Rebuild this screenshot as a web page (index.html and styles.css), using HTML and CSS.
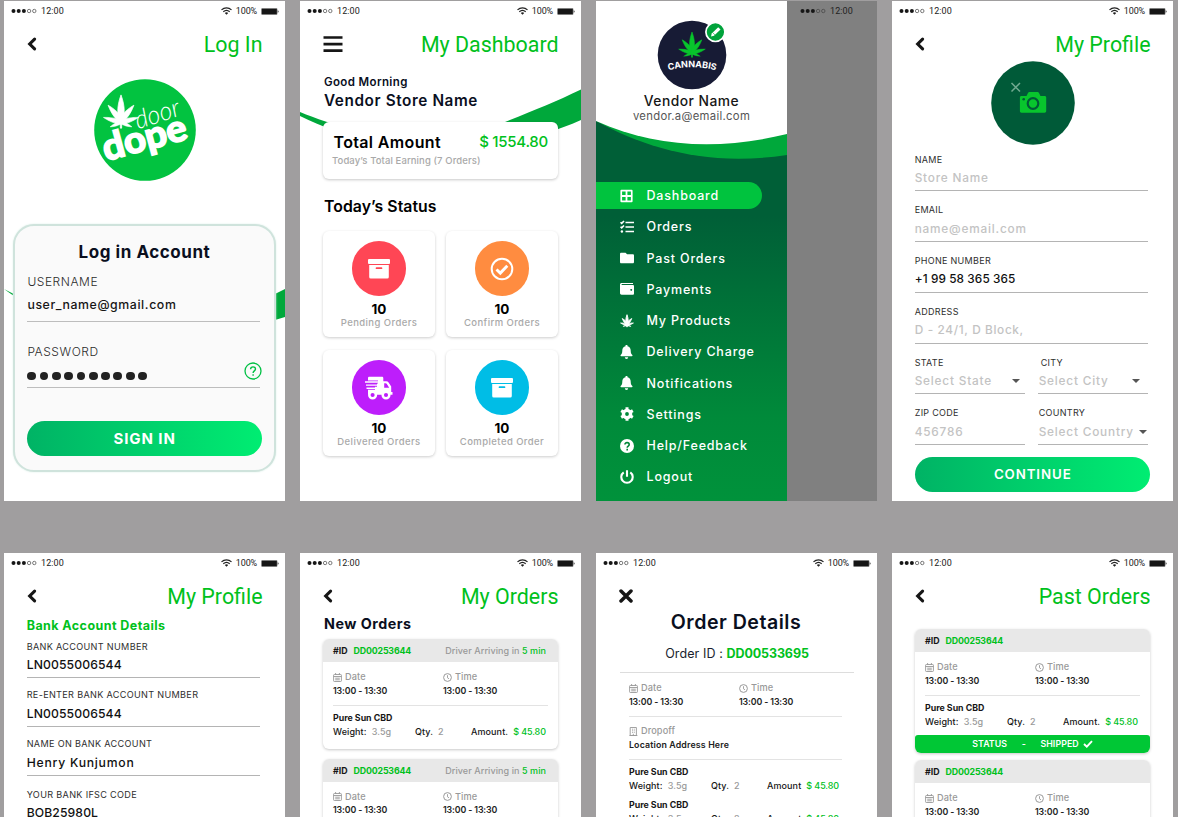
FILE: index.html
```html
<!DOCTYPE html>
<html lang="en">
<head>
<meta charset="utf-8">
<title>Vendor App Screens</title>
<link rel="stylesheet" href="styles.css">
</head>
<body>
<svg class="defs" width="0" height="0">
  <defs>
    <symbol id="dots" viewBox="0 0 26 6"><g fill="#161616"><circle cx="2.5" cy="3" r="2"/><circle cx="7.7" cy="3" r="2"/><circle cx="12.9" cy="3" r="2"/></g><g fill="none" stroke="#444" stroke-width=".7"><circle cx="18.1" cy="3" r="1.7"/><circle cx="23.3" cy="3" r="1.7"/></g></symbol>
    <symbol id="wifi" viewBox="0 0 11 8"><g fill="none" stroke="#222" stroke-width="1.2"><path d="M.5 2.9C3.4.1 7.6.1 10.5 2.9"/><path d="M2.3 4.8c1.9-1.8 4.5-1.8 6.4 0"/></g><path d="M3.8 6c1-.9 2.4-.9 3.4 0L5.5 7.8z" fill="#222"/></symbol>
    <symbol id="battery" viewBox="0 0 18 7"><rect x=".3" y=".3" width="16" height="6.4" rx=".8" fill="#555"/><rect x="1" y="1" width="14.6" height="5" fill="#161616"/><path d="M16.7 2.3c1.2.2 1.2 2.2 0 2.4z" fill="#222"/></symbol>
    <symbol id="back" viewBox="0 0 10 14"><path d="M7.6 2.2 2.7 7l4.9 4.8" fill="none" stroke="#161616" stroke-width="3.1" stroke-linecap="round"/></symbol>
    <symbol id="leaf" viewBox="-20 -24 40 36">
      <path id="blade" d="M0 5C-4.6-2-4.4-12 0-24 4.400-12 4.600-2 0 5z"/>
      <use href="#blade" transform="translate(0 3) rotate(-40) scale(.85 .88)"/><use href="#blade" transform="translate(0 3) rotate(40) scale(.85 .88)"/>
      <use href="#blade" transform="translate(0 5) rotate(-74) scale(.7 .8)"/><use href="#blade" transform="translate(0 5) rotate(74) scale(.7 .8)"/>
      <use href="#blade" transform="translate(0 5) rotate(-112) scale(.5 .52)"/><use href="#blade" transform="translate(0 5) rotate(112) scale(.5 .52)"/>
      <path d="M-.7 2h1.4v9h-1.4z"/>
    </symbol>
    <symbol id="calendar" viewBox="0 0 9 9"><path d="M1.3 1.5h6.4a.7.7 0 0 1 .7.7v5.600a.7.7 0 0 1-.7.7H1.300a.7.7 0 0 1-.7-.7V2.200a.7.7 0 0 1 .7-.7zM.6 3.500h7.800M2.600 0v2M6.400 0v2M2.200 5.200h4.600M2.200 6.800h4.600" fill="none" stroke="#999" stroke-width=".9"/></symbol>
    <symbol id="clock" viewBox="0 0 9 9"><circle cx="4.500" cy="4.500" r="3.900" fill="none" stroke="#999" stroke-width="1"/><path d="M4.500 2.200v2.600l1.500 1" fill="none" stroke="#999" stroke-width=".9"/></symbol>
    <symbol id="building" viewBox="0 0 9 9"><path d="M1.200.5h6.200v8H1.200zM.4 8.500h8M3 2.200h.9M4.800 2.200h.9M3 3.800h.9M4.800 3.800h.9M3 5.400h.9M4.800 5.400h.9M4.300 8.500V6.800" fill="none" stroke="#999" stroke-width=".9"/></symbol>
    <symbol id="box" viewBox="0 0 24 22"><rect x="1" y="1" width="22" height="5" rx="1" fill="#fff"/><path fill="#fff" fill-rule="evenodd" d="M2.200 7h19.600v12a1.500 1.500 0 0 1-1.500 1.500H3.700A1.500 1.500 0 0 1 2.200 19zM9.500 9.300a.5.500 0 0 0 0 1.700h5a.5.500 0 0 0 0-1.700z"/></symbol>
    <symbol id="bell" viewBox="0 0 14 14"><path d="M5.500.8a1 1 0 0 1 2 0v.5c2.100.5 3.200 2.200 3.200 4.300 0 2.700.7 3.500 1.600 4.400.5.500.2 1.300-.6 1.300H1.300c-.8 0-1.100-.8-.6-1.300.9-.9 1.600-1.700 1.600-4.400 0-2.100 1.100-3.800 3.200-4.300zM4.800 12.300h3.400a1.700 1.600 0 0 1-3.400 0z"/></symbol>
  </defs>
</svg>

<main class="board">

  <!-- Log in -->
  <section class="phone">
    <svg class="wave" viewBox="0 0 281 500"><path fill="#00a83b" d="M0 288C60 322 190 335 281 288V316C190 345 60 334 0 288z"/></svg>
    <div class="status"><svg class="dots"><use href="#dots"/></svg><span>12:00</span><span class="grow"></span><svg class="wifi"><use href="#wifi"/></svg><span class="pct">100%</span><svg class="battery"><use href="#battery"/></svg></div>
    <header class="bar"><svg class="back"><use href="#back"/></svg><h1>Log In</h1></header>
    <svg class="logo" viewBox="0 0 102 102">
      <circle cx="51" cy="51" r="50.800" fill="#02c340"/>
      <svg x="8" y="15" width="38" height="36" fill="#fff" stroke="#fff" stroke-width=".8"><use href="#leaf"/></svg>
      <g transform="rotate(-18 45 50)" fill="#fff"><text class="logo-door" x="44" y="50" textLength="46" lengthAdjust="spacingAndGlyphs">door</text></g>
      <g transform="rotate(-15 12 82)"><text class="logo-dope" x="12" y="82" textLength="86" lengthAdjust="spacingAndGlyphs">dope</text></g>
    </svg>
    <div class="login">
      <h2>Log in Account</h2>
      <div class="login-label">USERNAME</div>
      <div class="login-value">user_name@gmail.com</div>
      <div class="login-label pass">PASSWORD</div>
      <div class="login-pass"><span class="bullets"><i></i><i></i><i></i><i></i><i></i><i></i><i></i><i></i><i></i><i></i></span>
        <svg class="help" viewBox="0 0 18 18"><circle cx="9" cy="9" r="8" fill="none" stroke="#00c044" stroke-width="1.300"/><path d="M6.600 7.200c0-3.100 4.900-3.100 4.900-.1 0 1.800-2.400 1.800-2.400 3.800M9.100 12.200v1.500" fill="none" stroke="#00c044" stroke-width="1.400"/></svg></div>
      <button class="cta">SIGN IN</button>
    </div>
  </section>

  <!-- Dashboard -->
  <section class="phone">
    <svg class="wave" viewBox="0 0 281 500"><path fill="#00a83b" d="M0 111C50 132 130 150 205 121 235 109 255 101 281 88.500V119C200 155 90 160 0 115z"/></svg>
    <div class="status"><svg class="dots"><use href="#dots"/></svg><span>12:00</span><span class="grow"></span><svg class="wifi"><use href="#wifi"/></svg><span class="pct">100%</span><svg class="battery"><use href="#battery"/></svg></div>
    <header class="bar"><svg class="menu-btn" viewBox="0 0 20 17"><path d="M.5 1.500h19M.5 8.100h19M.5 14.700h19" stroke="#161616" stroke-width="2.700"/></svg><h1>My Dashboard</h1></header>
    <div class="dash">
      <div class="greet">Good Morning</div>
      <div class="store">Vendor Store Name</div>
      <div class="total">
        <div class="total-row"><span class="total-name">Total Amount</span><span class="total-sum">$ 1554.80</span></div>
        <div class="total-sub">Today’s Total Earning (7 Orders)</div>
      </div>
      <h2>Today’s Status</h2>
      <div class="tiles">
        <div class="tile"><div class="disc red"><svg width="24" height="22"><use href="#box"/></svg></div><b>10</b><span>Pending Orders</span></div>
        <div class="tile"><div class="disc orange"><svg width="24" height="24" viewBox="0 0 24 24" fill="none" stroke="#fff"><circle cx="12" cy="12" r="10.300" stroke-width="2"/><path d="m6.500 12.500 3.800 3.600 7-7.400" stroke-width="2.900"/></svg></div><b>10</b><span>Confirm Orders</span></div>
        <div class="tile"><div class="disc purple"><svg width="30" height="24" viewBox="0 0 30 24"><path fill="#fff" fill-rule="evenodd" d="M4 2c0-.8.600-1.300 1.500-1.300h12.300c.9 0 1.500.5 1.500 1.300v3.200h3c1 0 1.700.4 2.300 1.200l2.600 4.200v5.500h1.300v2.700H5.500c-1 0-1.500-.5-1.500-1.300zM20.200 7.200v4.500h5l-2.500-3.900c-.3-.4-.7-.6-1.200-.6z"/><path d="M1 6h13M1 9.100h12M1 12.200h10" stroke="#bd1efb" stroke-width="3.200"/><path d="M1 6h13.500M2 9.100h12M2.500 12.200h9.500" stroke="#fff" stroke-width="1.400"/><circle cx="8.600" cy="19" r="3.300" fill="#bd1efb" stroke="#fff" stroke-width="2.500"/><circle cx="22" cy="19" r="3.300" fill="#bd1efb" stroke="#fff" stroke-width="2.500"/></svg></div><b>10</b><span>Delivered Orders</span></div>
        <div class="tile"><div class="disc cyan"><svg width="24" height="22"><use href="#box"/></svg></div><b>10</b><span>Completed Order</span></div>
      </div>
    </div>
  </section>

  <!-- Drawer menu -->
  <section class="phone dimmed">
    <aside class="drawer">
      <svg class="wave" viewBox="0 0 191 500"><defs><linearGradient id="deep" x1="0" y1="0" x2="0" y2="1"><stop offset=".25" stop-color="#005f37"/><stop offset=".78" stop-color="#008a3a"/><stop offset="1" stop-color="#00923b"/></linearGradient></defs><path fill="url(#deep)" d="M0 120H191V500H0z"/><path fill="#00a83b" d="M0 120C50 147 110 166 191 154V100H0z"/><path fill="#fff" d="M0 0H191V133C122 150 58 146 0 120z"/></svg>
      <svg class="vendor" viewBox="0 0 88 72">
        <circle cx="44" cy="36" r="34.300" fill="#171b35"/>
        <svg x="29" y="13" width="30" height="26" fill="#08c52c" stroke="#08c52c" stroke-width=".8"><use href="#leaf"/></svg>
        <path id="arc" d="M18 52Q44 44.500 70 52" fill="none"/>
        <text class="vendor-mark"><textPath href="#arc" startOffset="2.500" textLength="48">CANNABIS</textPath></text>
        <circle cx="67.400" cy="13" r="9.500" fill="#00a33b" stroke="#fff" stroke-width="1.700"/>
        <path d="m63 17.500.7-2.900 6.500-6.300 2.300 2.200-6.500 6.300z" fill="#fff"/><path d="m64.800 13.800 2.200 2.100" stroke="#00a33b" stroke-width=".6"/>
      </svg>
      <div class="vendor-name">Vendor Name</div>
      <div class="vendor-mail">vendor.a@email.com</div>
      <nav class="nav">
        <a class="active"><svg viewBox="0 0 14 14"><path fill-rule="evenodd" d="M1.400.8h10.200a1 1 0 0 1 1 1v10.400a1 1 0 0 1-1 1H1.400a1 1 0 0 1-1-1V1.800a1 1 0 0 1 1-1zm.7 1.700v3.600h3.500V2.500zm5.300 0v3.600h3.500V2.500zM2.100 7.900v3.600h3.500V7.900zm5.300 0v3.600h3.500V7.900z"/></svg>Dashboard</a>
        <a><svg viewBox="0 0 14 14"><path d="M5.500 2.500H14M5.500 7H14M5.500 11.500H14M.5 2.200l1.200 1.200L4 1M.5 6.700l1.200 1.200L4 5.500" fill="none" stroke="#fff" stroke-width="1.600"/><circle cx="1.900" cy="11.500" r="1.200"/></svg>Orders</a>
        <a><svg viewBox="0 0 14 14"><path d="M1.300 1.700h4.200l1.600 1.600h5.600c.8 0 1.300.5 1.300 1.300v6.400c0 .8-.5 1.300-1.300 1.300H1.300c-.8 0-1.300-.5-1.300-1.300V3c0-.8.500-1.300 1.300-1.300z"/></svg>Past Orders</a>
        <a><svg viewBox="0 0 14 14"><path fill-rule="evenodd" d="M1.700 1H13v1H2c-.7 0-.7.9 0 .9h10.700c.8 0 1.300.5 1.300 1.300v7.300c0 .8-.5 1.300-1.300 1.300h-11C.7 12.800 0 12.100 0 11.100V2.700C0 1.700.7 1 1.700 1zM11.200 7a.9.900 0 1 0 .001 0z"/></svg>Payments</a>
        <a><svg class="leafy" viewBox="0 0 14 14"><use href="#leaf"/></svg>My Products</a>
        <a><svg viewBox="0 0 14 14"><use href="#bell"/></svg>Delivery Charge</a>
        <a><svg viewBox="0 0 14 14"><use href="#bell"/></svg>Notifications</a>
        <a><svg viewBox="0 0 14 14"><circle cx="7" cy="7" r="3.600" fill="none" stroke="#fff" stroke-width="3.400"/><path d="M7 .3v3M7 10.700v3M1.200 3.650l2.500 1.500M10.300 8.850l2.500 1.500M1.200 10.350l2.500-1.500M10.300 5.150l2.500-1.500" stroke="#fff" stroke-width="3"/></svg>Settings</a>
        <a><svg viewBox="0 0 14 14"><circle cx="7" cy="7" r="7"/><path d="M4.900 5.600c0-2.900 4.400-2.500 4.300.1 0 1.500-2 1.400-2 3.100M7.200 9.800v1.700" fill="none" stroke="#008639" stroke-width="1.600"/></svg>Help/Feedback</a>
        <a><svg viewBox="0 0 14 14"><path d="M3.700 2.400a5.700 5.700 0 1 0 6.600 0M7 .3v6.500" fill="none" stroke="#fff" stroke-width="2.100"/></svg>Logout</a>
      </nav>
    </aside>
    <div class="status behind"><svg class="dots"><use href="#dots"/></svg><span>12:00</span></div>
  </section>

  <!-- Profile -->
  <section class="phone">
    <div class="status"><svg class="dots"><use href="#dots"/></svg><span>12:00</span><span class="grow"></span><svg class="wifi"><use href="#wifi"/></svg><span class="pct">100%</span><svg class="battery"><use href="#battery"/></svg></div>
    <header class="bar"><svg class="back"><use href="#back"/></svg><h1>My Profile</h1></header>
    <svg class="photo" viewBox="0 0 84 84"><circle cx="42" cy="42" r="41.800" fill="#005a38"/><path d="m20.500 22 8.500 8.500m0-8.500-8.500 8.500" stroke="#72aa91" stroke-width="1.500"/><path fill="#08c52d" d="M30.500 35h5l1.500-3c.4-.8 1-1.100 1.800-1.100h7.400c.8 0 1.400.3 1.800 1.100l1.500 3h4.100c1 0 1.600.7 1.600 1.600v13.500c0 1-.7 1.600-1.600 1.600H30.500c-1 0-1.600-.7-1.600-1.600V36.600c0-1 .6-1.600 1.600-1.600z"/><circle cx="42" cy="42.500" r="5.300" fill="none" stroke="#005a38" stroke-width="2.200"/><circle cx="32.700" cy="38.200" r="1.300" fill="#005a38"/></svg>
    <form class="form">
      <div class="field muted"><label>NAME</label><div>Store Name</div></div>
      <div class="field muted"><label>EMAIL</label><div>name@email.com</div></div>
      <div class="field"><label>PHONE NUMBER</label><div class="tel">+1 99 58 365 365</div></div>
      <div class="field muted"><label>ADDRESS</label><div class="tight">D - 24/1, D Block,</div></div>
      <div class="pair">
        <div class="field muted"><label>STATE</label><div>Select State<i class="caret"></i></div></div>
        <div class="field muted"><label class="in">CITY</label><div class="in1">Select City<i class="caret near"></i></div></div>
      </div>
      <div class="pair">
        <div class="field muted"><label>ZIP CODE</label><div>456786</div></div>
        <div class="field muted"><label class="in1">COUNTRY</label><div class="in1">Select Country<i class="caret end"></i></div></div>
      </div>
      <button class="cta small">CONTINUE</button>
    </form>
  </section>

  <!-- Bank details -->
  <section class="phone">
    <div class="status"><svg class="dots"><use href="#dots"/></svg><span>12:00</span><span class="grow"></span><svg class="wifi"><use href="#wifi"/></svg><span class="pct">100%</span><svg class="battery"><use href="#battery"/></svg></div>
    <header class="bar"><svg class="back"><use href="#back"/></svg><h1>My Profile</h1></header>
    <form class="form bank">
      <h3>Bank Account Details</h3>
      <div class="field"><label>BANK ACCOUNT NUMBER</label><div class="code">LN0055006544</div></div>
      <div class="field"><label>RE-ENTER BANK ACCOUNT NUMBER</label><div class="code">LN0055006544</div></div>
      <div class="field last"><label>NAME ON BANK ACCOUNT</label><div>Henry Kunjumon</div></div>
      <div class="field"><label>YOUR BANK IFSC CODE</label><div class="code">BOB25980L</div></div>
    </form>
  </section>

  <!-- Orders -->
  <section class="phone">
    <div class="status"><svg class="dots"><use href="#dots"/></svg><span>12:00</span><span class="grow"></span><svg class="wifi"><use href="#wifi"/></svg><span class="pct">100%</span><svg class="battery"><use href="#battery"/></svg></div>
    <header class="bar"><svg class="back"><use href="#back"/></svg><h1>My Orders</h1></header>
    <div class="orders">
      <h2>New Orders</h2>
      <article class="order">
        <div class="order-head"><b>#ID</b><b class="green">DD00253644</b><span class="driver">Driver Arriving in <em>5 min</em></span></div>
        <div class="order-body">
          <div class="when"><div><span class="cap"><svg><use href="#calendar"/></svg>Date</span><span class="val">13:00 - 13:30</span></div><div><span class="cap"><svg><use href="#clock"/></svg>Time</span><span class="val">13:00 - 13:30</span></div></div>
          <div class="item"><b>Pure Sun CBD</b><p><span>Weight:<i>3.5g</i></span><span>Qty.<i>2</i></span><span>Amount.<em>$ 45.80</em></span></p></div>
        </div>
      </article>
      <article class="order">
        <div class="order-head"><b>#ID</b><b class="green">DD00253644</b><span class="driver">Driver Arriving in <em>5 min</em></span></div>
        <div class="order-body">
          <div class="when"><div><span class="cap"><svg><use href="#calendar"/></svg>Date</span><span class="val">13:00 - 13:30</span></div><div><span class="cap"><svg><use href="#clock"/></svg>Time</span><span class="val">13:00 - 13:30</span></div></div>
        </div>
      </article>
    </div>
  </section>

  <!-- Order details -->
  <section class="phone">
    <div class="status"><svg class="dots"><use href="#dots"/></svg><span>12:00</span><span class="grow"></span><svg class="wifi"><use href="#wifi"/></svg><span class="pct">100%</span><svg class="battery"><use href="#battery"/></svg></div>
    <header class="bar"><svg class="close" viewBox="0 0 14 14"><path d="m2 2 10 10M12 2 2 12" stroke="#161616" stroke-width="3.500" stroke-linecap="round"/></svg></header>
    <div class="details">
      <h2>Order Details</h2>
      <div class="order-id">Order ID : <b>DD00533695</b></div>
      <div class="sheet">
        <div class="when"><div><span class="cap"><svg><use href="#calendar"/></svg>Date</span><span class="val">13:00 - 13:30</span></div><div><span class="cap"><svg><use href="#clock"/></svg>Time</span><span class="val">13:00 - 13:30</span></div></div>
        <div class="when"><div class="wide"><span class="cap"><svg><use href="#building"/></svg>Dropoff</span><span class="val">Location Address Here</span></div></div>
        <div class="item"><b>Pure Sun CBD</b><p><span>Weight:<i>3.5g</i></span><span>Qty.<i>2</i></span><span>Amount<em>$ 45.80</em></span></p></div>
        <div class="item"><b>Pure Sun CBD</b><p><span>Weight:<i>3.5g</i></span><span>Qty.<i>2</i></span><span>Amount<em>$ 45.80</em></span></p></div>
      </div>
    </div>
  </section>

  <!-- Past orders -->
  <section class="phone">
    <div class="status"><svg class="dots"><use href="#dots"/></svg><span>12:00</span><span class="grow"></span><svg class="wifi"><use href="#wifi"/></svg><span class="pct">100%</span><svg class="battery"><use href="#battery"/></svg></div>
    <header class="bar"><svg class="back"><use href="#back"/></svg><h1>Past Orders</h1></header>
    <div class="orders past">
      <article class="order">
        <div class="order-head"><b>#ID</b><b class="green">DD00253644</b></div>
        <div class="order-body">
          <div class="when"><div><span class="cap"><svg><use href="#calendar"/></svg>Date</span><span class="val">13:00 - 13:30</span></div><div><span class="cap"><svg><use href="#clock"/></svg>Time</span><span class="val">13:00 - 13:30</span></div></div>
          <div class="item"><b>Pure Sun CBD</b><p><span>Weight:<i>3.5g</i></span><span>Qty.<i>2</i></span><span>Amount.<em>$ 45.80</em></span></p></div>
        </div>
        <div class="shipped"><span>STATUS</span><span>-</span><span>SHIPPED<svg viewBox="0 0 10 8"><path d="m1 4 2.800 2.700L9 1.200" fill="none" stroke="#fff" stroke-width="1.900"/></svg></span></div>
      </article>
      <article class="order">
        <div class="order-head"><b>#ID</b><b class="green">DD00253644</b></div>
        <div class="order-body">
          <div class="when"><div><span class="cap"><svg><use href="#calendar"/></svg>Date</span><span class="val">13:00 - 13:30</span></div><div><span class="cap"><svg><use href="#clock"/></svg>Time</span><span class="val">13:00 - 13:30</span></div></div>
        </div>
      </article>
    </div>
  </section>
</main>
</body>
</html>
```

FILE: styles.css
```css
* { box-sizing: border-box; }
body { margin: 0; background: #a09e9f; height: 817px; overflow: hidden; font-family: Inter, "Open Sans", sans-serif; color: #161616; }
h1, h2, h3, p { margin: 0; }
i, em { font-style: normal; }
svg { display: block; flex: none; }
.defs { position: absolute; }
.board { display: grid; grid-template-columns: repeat(4, 281px); grid-template-rows: 500px 264px; gap: 52px 15px; padding: 1px 0 0 4px; height: 817px; overflow: hidden; }
.phone { position: relative; background: #fff; overflow: hidden; }
.wave { position: absolute; left: 0; top: 0; width: 100%; height: 500px; }

.status { position: relative; display: flex; align-items: center; height: 20px; padding: 0 6px 0 7px; font: 9px/20px Roboto, sans-serif; color: #222; letter-spacing: .1px; }
.dots { width: 26px; height: 6px; margin-right: 4px; }
.grow { flex: 1; }
.wifi { width: 11px; height: 8px; margin-right: 3.500px; }
.pct { letter-spacing: -.15px; }
.battery { width: 18px; height: 7px; margin-left: 4px; }
.bar { position: relative; display: flex; align-items: center; height: 47px; padding: 0 22.500px 1px 22.500px; }
.bar h1 { margin: 2px 0 0 auto; font: 400 21.400px/30px Roboto, sans-serif; color: #00c11c; }
.back { width: 10px; height: 14px; }
.menu-btn { width: 20px; height: 17px; }
.close { width: 14px; height: 14px; }

.logo { width: 102px; height: 102px; margin: 11px auto 0; }
.logo-door { font: italic 300 26px Lato, sans-serif; }
.logo-dope { font: 700 37px Lato, sans-serif; fill: #fff; stroke: #fff; stroke-width: 1.800px; }
.login { position: relative; margin: 42.500px 9.500px 0 9px; height: 248.500px; padding: 15.500px 12px 0 12.400px; background: #fafafa; border: 2px solid #cfe3dc; border-radius: 21px; box-shadow: 0 0 2px #d9eee6; }
.login h2 { font-size: 17px; line-height: 22px; text-align: center; letter-spacing: .55px; color: #0a0f1e; margin-top: -.2px; }
.login-label { font-size: 12px; line-height: 16px; margin-top: 11px; letter-spacing: .55px; color: #2b2b2b; font-weight: 300; }
.login-value { font-size: 12.300px; font-weight: 500; line-height: 18px; margin-top: 6px; border-bottom: 1px solid #bdbdbd; height: 26px; letter-spacing: .6px; width: 233px; }
.login-label.pass { margin-top: 22px; }
.login-pass { display: flex; align-items: flex-start; height: 28px; border-bottom: 1px solid #bdbdbd; width: 233px; }
.bullets { display: flex; gap: 3.500px; padding-top: 11.800px; }
.bullets i { width: 8.800px; height: 8.800px; border-radius: 50%; background: #222; }
.help { width: 18px; height: 18px; margin: 2.500px -2px 0 auto; }
.cta { display: block; width: 234.500px; height: 35px; border: 0; padding: 0; border-radius: 18px; background: linear-gradient(90deg, #00b365, #00ed72); color: #fff; font: 700 15px/35px Inter, sans-serif; letter-spacing: .9px; margin-top: 33px; }

.dash { position: relative; padding: 0 23px; }
.greet { font-size: 11.500px; font-weight: 600; line-height: 14px; margin-top: 7px; padding-left: 1px; color: #0a0f1e; letter-spacing: .37px; }
.store { font-size: 15.300px; font-weight: 600; line-height: 20px; margin-top: 2px; padding-left: 1px; color: #0a0f1e; letter-spacing: .6px; }
.total { margin-top: 11.300px; height: 57px; border-radius: 6px; background: #fff; box-shadow: 0 1px 3px rgba(0,0,0,.22); padding: 10px 10px 0 9px; }
.total-row { display: flex; justify-content: space-between; line-height: 20px; padding-left: 1.500px; }
.total-name { font-size: 16px; font-weight: 600; color: #000; letter-spacing: .35px; }
.total-sum { font-size: 15px; font-weight: 500; color: #00c11c; letter-spacing: -.25px; }
.total-sub { font-size: 9.500px; font-weight: 500; line-height: 14px; margin-top: 1.500px; color: #a9a9a9; white-space: nowrap; letter-spacing: .1px; }
.dash h2 { font-size: 15.800px; font-weight: 600; line-height: 20px; margin-top: 17.500px; padding-left: 1px; color: #000; letter-spacing: .05px; }
.tiles { display: grid; grid-template-columns: 112px 112px; gap: 13px 11px; margin-top: 14.500px; }
.tile { height: 106px; border-radius: 6px; box-shadow: 0 1px 3px rgba(0,0,0,.2); background: #fff; display: flex; flex-direction: column; align-items: center; padding-top: 10px; white-space: nowrap; }
.disc { width: 54.600px; height: 54.600px; border-radius: 50%; display: flex; align-items: center; justify-content: center; }
.red { background: #ff4655; } .orange { background: #ff8c40; } .purple { background: #bd1efb; } .cyan { background: #00bde6; }
.tile b { font-size: 13.500px; line-height: 16px; margin-top: 5.200px; color: #000; font-weight: 700; }
.tile span { font-size: 9.500px; font-weight: 500; line-height: 12px; margin-top: -.4px; color: #a9a9a9; letter-spacing: .42px; }

.dimmed { background: #808080; display: flex; }
.drawer { position: relative; width: 191px; height: 500px; background: #005f37; display: flex; flex-direction: column; align-items: center; }
.behind { align-self: flex-start; padding-left: 13px; color: #222; }
.vendor { position: relative; width: 88px; height: 72px; margin-top: 17.500px; }
.vendor-mark { font: 700 9px Inter, sans-serif; fill: #fff; }
.vendor-name { position: relative; font-size: 13.800px; font-weight: 500; line-height: 18px; margin-top: 1.500px; letter-spacing: .5px; }
.vendor-mail { position: relative; font-size: 11.300px; line-height: 14px; margin-top: -1px; color: #555; letter-spacing: .3px; }
.nav { position: relative; align-self: stretch; margin-top: 59px; }
.nav a { display: flex; align-items: center; height: 27.250px; margin-bottom: 4px; padding-left: 24px; color: #fff; font-size: 12.500px; font-weight: 500; letter-spacing: .82px; }
.nav svg { width: 14px; height: 14px; margin-right: 12.500px; fill: #fff; }
.nav .leafy { stroke: #fff; stroke-width: 2.600px; }
.nav .active { width: 166px; background: #00c33e; border-radius: 0 14px 14px 0; }

.photo { position: relative; width: 84px; height: 84px; margin: -6.700px auto 0; }
.form { padding: 0 26px 0 22.700px; margin-top: 8.200px; }
.field { width: 233px; margin-bottom: 13px; border-bottom: 1px solid #b4b4b4; }
.field label { display: block; font-size: 9px; line-height: 12px; color: #2e2e2e; letter-spacing: .3px; }
.field div { display: flex; align-items: center; margin-top: 4.400px; height: 20.400px; padding-bottom: 4.400px; font-size: 11.800px; font-weight: 500; line-height: 16px; letter-spacing: .8px; white-space: nowrap; color: #111; }
.muted div { color: #c3c3c3; }
.field .tel { letter-spacing: .1px; }
.field .tight { letter-spacing: .65px; }
.pair { display: flex; justify-content: space-between; width: 233px; }
.pair .field { width: 110px; }
.field .in { padding-left: 3px; }
.field .in1 { padding-left: 1px; }
.caret { margin-left: auto; margin-right: 5px; border: 4px solid transparent; border-top: 4.500px solid #555; border-bottom: 0; }
.caret.near { margin-right: 8px; }
.caret.end { margin-right: 1px; }
.cta.small { margin: -1.500px 0 0 .800px; font-size: 13.300px; font-weight: 600; letter-spacing: .9px; }
.bank { margin-top: -3.200px; }
.bank h3 { font-size: 12.500px; line-height: 18px; color: #00c11c; letter-spacing: .43px; margin-bottom: 5.800px; }
.bank .field { margin-bottom: 11px; }
.bank .field.last { margin-bottom: 13px; }
.bank .field label { letter-spacing: .32px; font-size: 9.100px; }
.bank .field div { font-size: 12.200px; letter-spacing: .75px; }
.bank .field .code { letter-spacing: .1px; }

.orders { padding: 0 23px; }
.orders h2 { font-size: 14.300px; font-weight: 700; line-height: 18px; margin: -5px 0 6px 1px; color: #0a0f1e; letter-spacing: .5px; }
.order { border-radius: 6px; overflow: hidden; box-shadow: 0 1px 3px rgba(0,0,0,.22); margin-bottom: 10px; background: #fff; }
.order-head { display: flex; height: 23px; line-height: 24px; background: #e8e8e8; padding: 0 12px 0 10px; font-size: 8.800px; gap: 6px; }
.green, .driver em { color: #00c11c; }
.order-head .green { letter-spacing: -.15px; }
.driver { margin-left: auto; color: #999; font-size: 9px; font-weight: 500; letter-spacing: .08px; }
.order-body { padding: 9px 10px 10.500px; }
.when { display: flex; padding-bottom: 8px; border-bottom: 1px solid #e3e3e3; margin-bottom: 6.500px; }
.when > div { flex: none; width: 110px; display: flex; flex-direction: column; gap: 1.500px; }
.when > div:last-child { width: 90px; }
.when > .wide:last-child { width: auto; }
.cap { display: flex; align-items: center; font-size: 9.200px; font-weight: 500; line-height: 12px; height: 12px; color: #999; letter-spacing: .1px; }
.cap svg { width: 9px; height: 9px; margin-right: 3px; }
.val { font-size: 8.800px; font-weight: 600; line-height: 12px; color: #222; white-space: nowrap; letter-spacing: -.12px; }
.wide .val { letter-spacing: .15px; }
.item b { display: block; font-size: 8.800px; line-height: 12px; margin-bottom: 2px; }
.item p { display: flex; font-size: 9px; font-weight: 500; line-height: 12px; white-space: nowrap; }
.item p span { letter-spacing: .1px; }
.item p span:nth-child(1) { width: 82px; }
.item p span:nth-child(2) { width: 56px; }
.item i { color: #999; margin-left: 5px; }
.item em { color: #00c11c; margin-left: 5px; letter-spacing: -.1px; }

.past { padding-top: 9px; }
.past .order { margin-bottom: 7px; }
.past .order-body { padding-bottom: 7px; }
.shipped { display: flex; gap: 14.500px; justify-content: center; height: 18px; line-height: 18px; border-radius: 3px; background: #00c735; color: #fff; font-size: 8.800px; font-weight: 600; letter-spacing: .1px; }
.shipped span { display: flex; align-items: center; }
.shipped svg { width: 10px; height: 8px; margin-left: 4px; }

.details { text-align: center; }
.details h2 { font-size: 19.600px; font-weight: 600; line-height: 24px; margin-top: -10.500px; padding-right: 1px; color: #0a0f1e; letter-spacing: .5px; }
.order-id { font-size: 12.500px; line-height: 16px; margin: 12px 24px 0; padding-bottom: 10.500px; border-bottom: 1px solid #ddd; width: 234px; letter-spacing: .1px; color: #1a1f2e; }
.order-id b { color: #00c11c; letter-spacing: -.1px; }
.sheet { padding: 9.300px 35px 0 33px; text-align: left; }
.sheet .when { margin-bottom: 8.300px; }
.sheet .item { margin-bottom: 6.700px; }
.sheet .when + .item { margin-top: -1.700px; }
```
